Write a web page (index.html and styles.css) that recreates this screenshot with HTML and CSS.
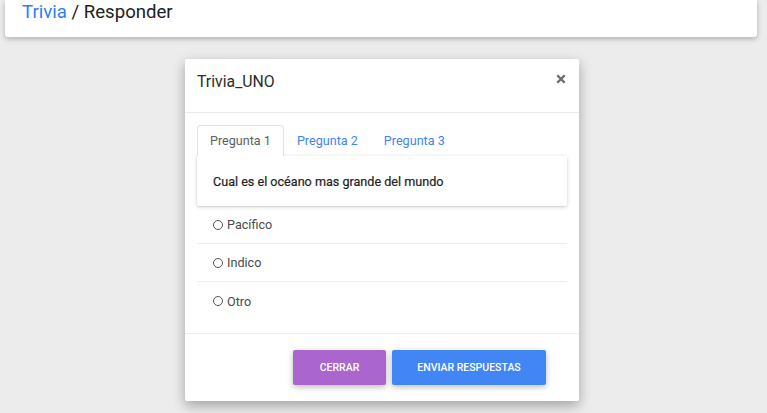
FILE: index.html
```html
<!DOCTYPE html>
<html lang="es">
<head>
<meta charset="utf-8">
<title>Trivia / Responder</title>
<link rel="stylesheet" href="styles.css">
</head>
<body>
<header class="topbar">
  <a class="crumb-link" href="#">Trivia</a><span class="crumb-sep"> / </span><span class="crumb-current">Responder</span>
</header>
<main class="stage">
  <section class="modal">
    <div class="modal-header">
      <h5 class="modal-title">Trivia_UNO</h5>
      <button class="close" aria-label="Cerrar">
        <svg width="10" height="10" viewBox="0 0 10 10"><path d="M1.3 1.3 L8.7 8.7 M8.7 1.3 L1.3 8.7" stroke="#6b6b6b" stroke-width="2.3" stroke-linecap="butt"/></svg>
      </button>
    </div>
    <div class="modal-body">
      <nav class="tabs">
        <a class="tab active" href="#">Pregunta 1</a>
        <a class="tab" href="#">Pregunta 2</a>
        <a class="tab" href="#">Pregunta 3</a>
      </nav>
      <div class="question-card">Cual es el océano mas grande del mundo</div>
      <ul class="options">
        <li class="option"><span class="radio"></span>Pacífico</li>
        <li class="option"><span class="radio"></span>Indico</li>
        <li class="option"><span class="radio"></span>Otro</li>
      </ul>
    </div>
    <div class="modal-footer">
      <button class="btn btn-secondary">Cerrar</button>
      <button class="btn btn-primary">Enviar respuestas</button>
    </div>
  </section>
</main>
</body>
</html>
```
FILE: styles.css
```css
* { box-sizing: border-box; }
html, body { margin: 0; padding: 0; }
body {
  background: #ececec;
  font-family: Roboto, "Liberation Sans", Arial, sans-serif;
  color: #212529;
  width: 767px;
  height: 413px;
  overflow: hidden;
}
.topbar {
  margin: 0 10px 0 5px;
  height: 37px;
  background: #fff;
  border-radius: 0 0 3px 3px;
  box-shadow: 0 2px 5px rgba(0,0,0,.16), 0 2px 6px rgba(0,0,0,.10);
  padding: 0 0 0 17px;
  font-size: 18.6px;
  line-height: 24px;
}
.crumb-link { color: #2f80f5; text-decoration: none; }
.crumb-sep, .crumb-current { color: #212121; }
.stage {
  padding-top: 22px;
  padding-left: 185px;
}
.modal {
  width: 394px;
  background: #fff;
  border-radius: 2px;
  box-shadow: 0 5px 11px rgba(0,0,0,.18), 0 4px 15px rgba(0,0,0,.15);
}
.modal-header {
  display: flex;
  justify-content: space-between;
  align-items: flex-start;
  height: 54px;
  padding: 11px 12px 0 12px;
  border-bottom: 1px solid #e8ebee;
}
.modal-title {
  margin: 0;
  font-size: 15.8px;
  font-weight: 400;
  line-height: 24px;
  color: #2b2b2b;
}
.close {
  border: 0;
  background: none;
  padding: 0;
  margin: 4px 1px 0 0;
  width: 10px;
  height: 10px;
  display: flex;
}
.modal-body {
  padding: 12px 12px 13px 12px;
}
.tabs {
  display: flex;
  height: 31px;
}
.tab {
  display: flex;
  align-items: center;
  padding: 0 12px 1px;
  font-size: 12.6px;
  color: #3e84f4;
  text-decoration: none;
  border: 1px solid transparent;
  border-bottom: 0;
  border-radius: 4px 4px 0 0;
}
.tab.active {
  color: #5b5f63;
  border-color: #dfe3e7;
  background: #fff;
}
.question-card {
  height: 50px;
  padding: 0 16px;
  display: flex;
  align-items: center;
  font-size: 12.6px;
  font-weight: 400;
  color: #1e1e1e;
  -webkit-text-stroke: 0.2px #1e1e1e;
  border-radius: 0 2px 2px 2px;
  box-shadow: 0 1px 4px rgba(0,0,0,.16), 0 1px 2px rgba(0,0,0,.08);
}
.options {
  list-style: none;
  margin: 0;
  padding: 0;
}
.option {
  height: 38px;
  display: flex;
  align-items: center;
  padding-left: 16px;
  font-size: 12.6px;
  color: #4a4a4a;
  border-bottom: 1px solid #eceef0;
}
.option:last-child { border-bottom: 0; }
.radio {
  width: 10px;
  height: 10px;
  border: 1.2px solid #555;
  border-radius: 50%;
  margin-right: 4px;
  flex: none;
}
.modal-footer {
  display: flex;
  justify-content: flex-end;
  gap: 6px;
  border-top: 1px solid #eceef1;
  padding: 16px 33px 16px 0;
}
.btn {
  height: 35px;
  border: 0;
  border-radius: 2px;
  color: #fff;
  font-family: Roboto, "Liberation Sans", Arial, sans-serif;
  font-size: 10.5px;
  font-weight: 500;
  text-transform: uppercase;
  box-shadow: 0 2px 5px rgba(0,0,0,.16), 0 2px 8px rgba(0,0,0,.12);
}
.btn-secondary { background: #aa66cc; width: 93px; }
.btn-primary { background: #4285f4; width: 154px; }
```
